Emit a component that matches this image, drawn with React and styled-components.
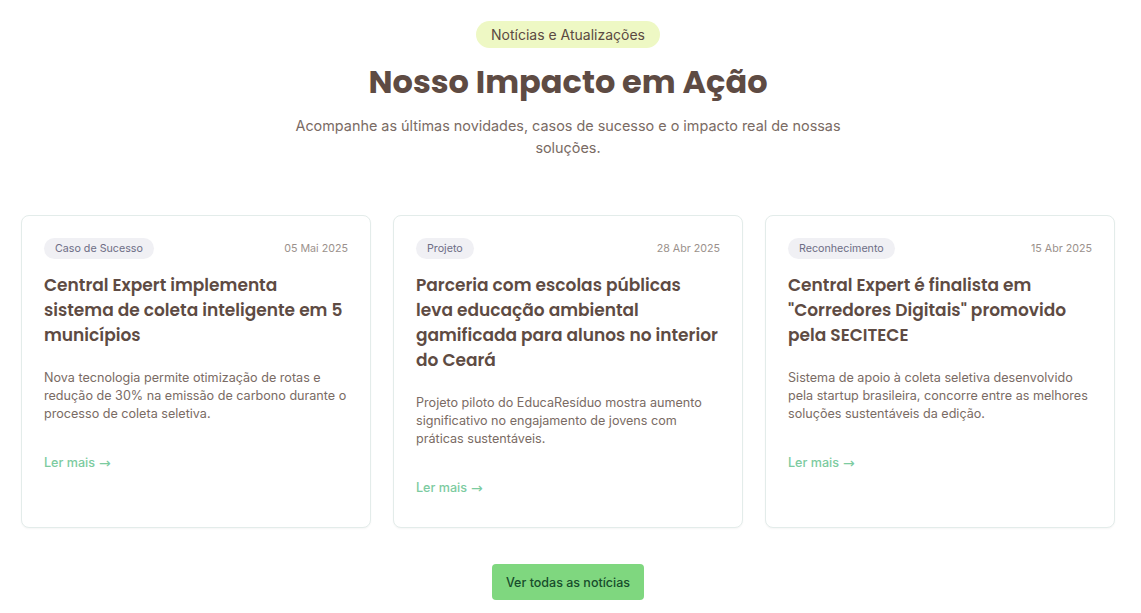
import React from 'react';
import styled, { createGlobalStyle } from 'styled-components';

const GlobalStyle = createGlobalStyle`
  * { box-sizing: border-box; }
  body {
    margin: 0;
    background: #ffffff;
    font-family: Inter, "Noto Sans", sans-serif;
  }
`;

const Section = styled.section`
  display: flex;
  flex-direction: column;
  align-items: center;
  padding: 21px 26px 13px 21px;
`;

const Pill = styled.span`
  display: inline-flex;
  align-items: center;
  height: 27px;
  padding: 0 15px;
  border-radius: 999px;
  background: #eef8c4;
  color: #5b4a42;
  font-size: 14px;
`;

const Heading = styled.h2`
  margin: 14px 0 0;
  font-family: Poppins, "Open Sans", sans-serif;
  font-size: 32px;
  font-weight: 700;
  line-height: 40px;
  color: #5e4b43;
`;

const Lead = styled.p`
  margin: 13px 0 0;
  max-width: 560px;
  text-align: center;
  font-size: 14.4px;
  line-height: 22px;
  color: #7a6b64;
`;

const Grid = styled.div`
  align-self: stretch;
  display: grid;
  grid-template-columns: repeat(3, 1fr);
  gap: 22px;
  margin-top: 56px;
`;

const Card = styled.article`
  display: flex;
  flex-direction: column;
  padding: 22px 22px 30px;
  border: 1px solid #e3ecea;
  border-radius: 8px;
  background: #fff;
  box-shadow: 0 1px 2px rgba(0, 0, 0, 0.04);
`;

const Meta = styled.div`
  display: flex;
  justify-content: space-between;
  align-items: center;
`;

const Tag = styled.span`
  display: inline-flex;
  align-items: center;
  height: 21px;
  padding: 0 11px;
  border-radius: 999px;
  background: #f0f0f4;
  color: #6d6d85;
  font-size: 10.7px;
`;

const Date = styled.span`
  font-size: 10.7px;
  color: #9b918c;
`;

const Title = styled.h3`
  margin: 14px 0 0;
  font-family: Poppins, "Open Sans", sans-serif;
  font-size: 17px;
  font-weight: 600;
  line-height: 25px;
  color: #5e4b43;
`;

const Excerpt = styled.p`
  margin: 21px 0 0;
  font-size: 12.6px;
  line-height: 18px;
  color: #7a6b64;
`;

const More = styled.a`
  display: flex;
  align-items: center;
  gap: 4px;
  margin-top: 31px;
  font-size: 12.6px;
  font-weight: 500;
  line-height: 18px;
  color: #7ccba0;
  text-decoration: none;
`;

const Arrow = styled.span`
  font-family: "DejaVu Sans", sans-serif;
  font-size: 14px;
`;

const Button = styled.a`
  display: inline-flex;
  align-items: center;
  height: 36px;
  margin-top: 36px;
  padding: 0 14px;
  border-radius: 4px;
  background: #7fd77f;
  color: #184d2c;
  font-size: 12.5px;
  font-weight: 500;
  text-decoration: none;
`;

const news = [
  {
    tag: 'Caso de Sucesso',
    date: '05 Mai 2025',
    title: 'Central Expert implementa sistema de coleta inteligente em 5 municípios',
    text: 'Nova tecnologia permite otimização de rotas e redução de 30% na emissão de carbono durante o processo de coleta seletiva.',
  },
  {
    tag: 'Projeto',
    date: '28 Abr 2025',
    title: 'Parceria com escolas públicas leva educação ambiental gamificada para alunos no interior do Ceará',
    text: 'Projeto piloto do EducaResíduo mostra aumento significativo no engajamento de jovens com práticas sustentáveis.',
  },
  {
    tag: 'Reconhecimento',
    date: '15 Abr 2025',
    title: 'Central Expert é finalista em "Corredores Digitais" promovido pela SECITECE',
    text: 'Sistema de apoio à coleta seletiva desenvolvido pela startup brasileira, concorre entre as melhores soluções sustentáveis da edição.',
  },
];

export default function App() {
  return <>
    <GlobalStyle />
    <Section>
      <Pill>Notícias e Atualizações</Pill>
      <Heading>Nosso Impacto em Ação</Heading>
      <Lead>Acompanhe as últimas novidades, casos de sucesso e o impacto real de nossas soluções.</Lead>

      <Grid>
        {news.map((item) => (
          <Card key={item.title}>
            <Meta>
              <Tag>{item.tag}</Tag>
              <Date>{item.date}</Date>
            </Meta>
            <Title>{item.title}</Title>
            <Excerpt>{item.text}</Excerpt>
            <More href="#">Ler mais <Arrow>→</Arrow></More>
          </Card>
        ))}
      </Grid>

      <Button href="#">Ver todas as notícias</Button>
    </Section>
  </>;
}
